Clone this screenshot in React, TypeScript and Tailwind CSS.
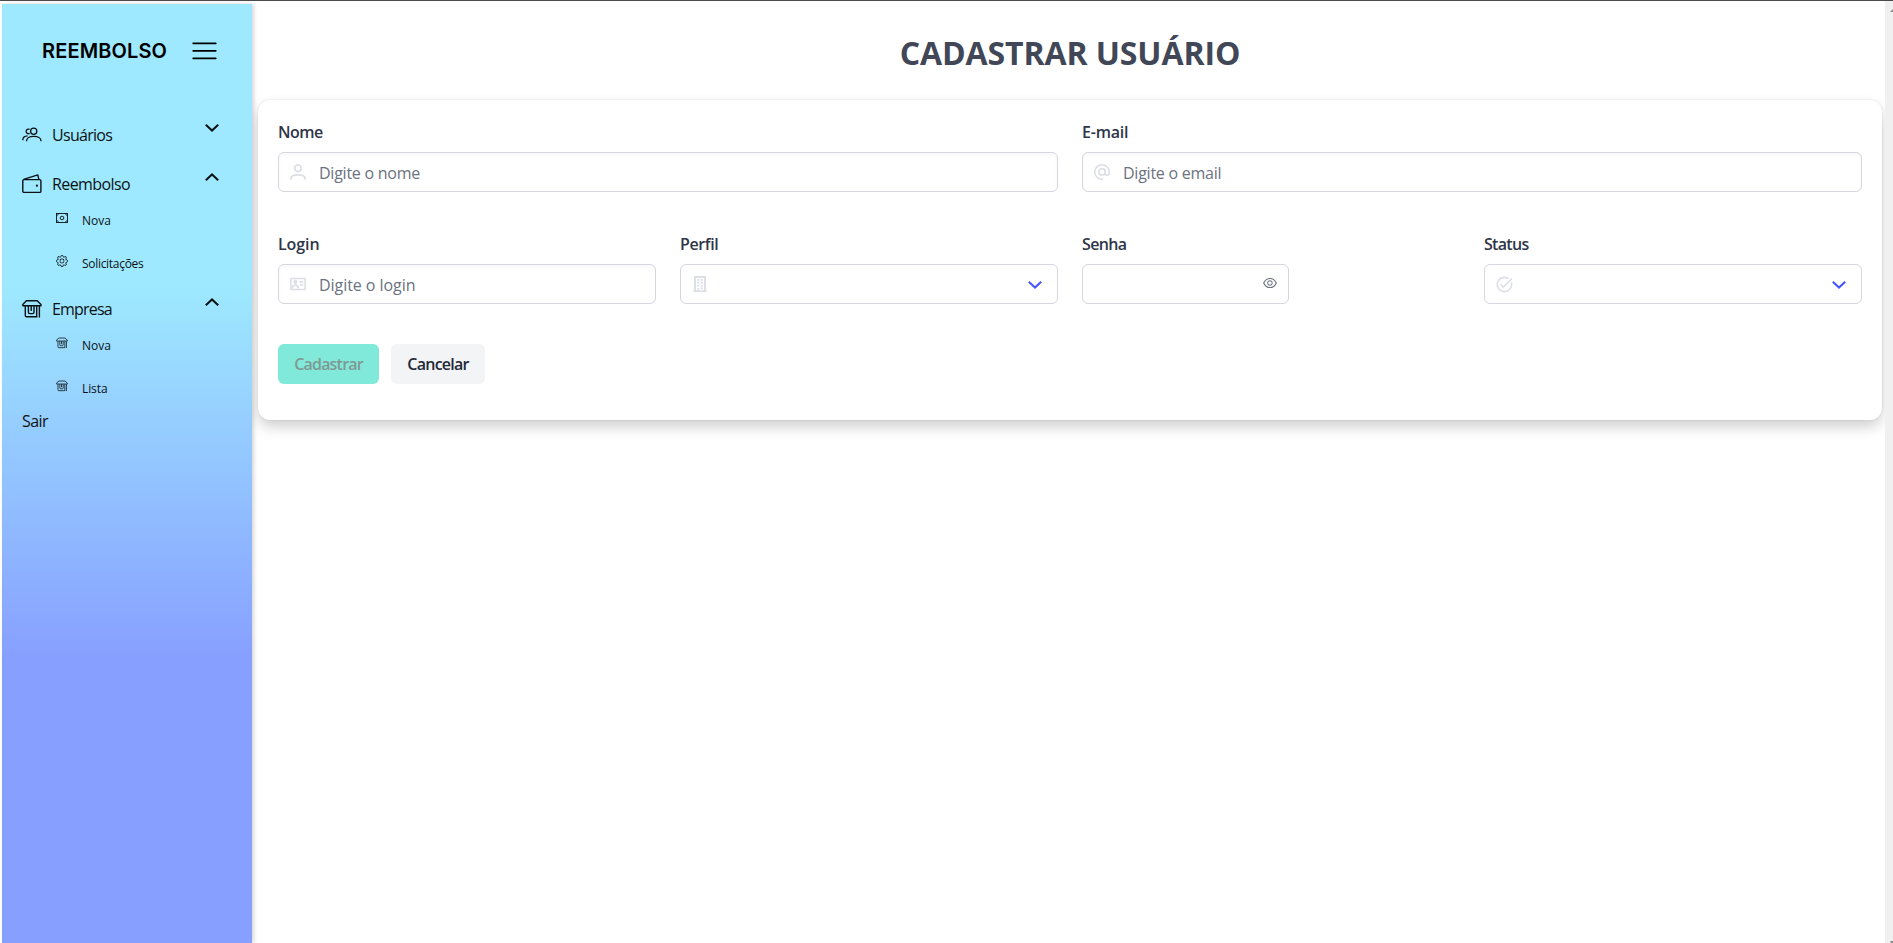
import type { ReactNode } from "react";
import { AiOutlineEye } from "react-icons/ai";
import { BsGear } from "react-icons/bs";
import { MdTaskAlt } from "react-icons/md";

function UsersIcon() {
  return (
    <svg viewBox="0 0 20 20" className="size-5 shrink-0" fill="none" stroke="currentColor" strokeWidth="1.3">
      <circle cx="11.7" cy="6.3" r="3.1" />
      <path d="M7.6 4.4A2.3 2.3 0 1 0 7.6 8.4" />
      <path d="M4.6 16.3v-.5c0-2.6 3-4.4 7.2-4.4s7.2 1.8 7.2 4.4v.5" />
      <path d="M.8 15.2c0-2.6 2-4.2 4.8-4.3" />
    </svg>
  );
}

function WalletIcon() {
  return (
    <svg viewBox="0 0 20 20" className="size-5 shrink-0" fill="none" stroke="currentColor" strokeWidth="1.4">
      <rect x=".8" y="5.6" width="18.1" height="12.8" rx="1.2" />
      <path d="M1.6 5.4 15.8.9l1 4.2" strokeLinejoin="round" />
      <circle cx="14.9" cy="11.7" r="1.1" fill="currentColor" stroke="none" />
    </svg>
  );
}

function ShopIcon({ className }: { className: string }) {
  return (
    <svg viewBox="0 0 20 20" className={className} fill="none" stroke="currentColor">
      <path d="M4.4 1.7h10.8l3.8 3.8v1.2H.8V5.5L4.4 1.7Z" strokeLinejoin="round" />
      <path d="M3.3 7v9.4c0 .8.6 1.4 1.4 1.4h10V7M17.4 7v11.4" />
      <path d="M6.4 7v6.2c0 .8.6 1.4 1.4 1.4h2.8c.8 0 1.4-.6 1.4-1.4V7M9.2 7v5" />
    </svg>
  );
}

function MoneyIcon({ className }: { className: string }) {
  return (
    <svg viewBox="0 0 12 12" className={className} fill="none" stroke="currentColor" strokeWidth=".9">
      <rect x=".5" y="1.5" width="11" height="9" />
      <circle cx="6" cy="6" r="1.8" />
      <path d="M.5 4.1 2.9 1.5M11.5 4.1 9.1 1.5M.5 7.9l2.4 2.6M11.5 7.9l-2.4 2.6" />
    </svg>
  );
}

function Chevron({ up = false, className = "" }: { up?: boolean; className?: string }) {
  return (
    <svg viewBox="0 0 14 8" className={`h-2 w-3.5 shrink-0 ${className}`} fill="none" stroke="currentColor" strokeWidth="2">
      <path d={up ? "M.8 7.2 7 1.4l6.2 5.8" : "M.8.8 7 6.6 13.2.8"} />
    </svg>
  );
}

function PersonIcon() {
  return (
    <svg viewBox="0 0 16 16" className="size-4" fill="none" stroke="currentColor" strokeWidth="1.8">
      <circle cx="8" cy="4.2" r="3.3" />
      <path d="M.9 15.8v-1.2c0-2.2 2.6-3.7 7.1-3.7s7.1 1.5 7.1 3.7v1.2" />
    </svg>
  );
}

function AtIcon() {
  return (
    <svg viewBox="0 0 16 16" className="size-4" fill="none" stroke="currentColor" strokeWidth="1.6">
      <circle cx="8" cy="7.9" r="3.1" />
      <path d="M11.1 4.8V9.3c0 1.1.7 1.8 1.9 1.8s2.2-.9 2.2-2.3V7.6A7 7 0 0 0 8 .8 7.1 7.1 0 0 0 .8 7.9 7.1 7.1 0 0 0 9 15.2" />
    </svg>
  );
}

function CardIcon() {
  return (
    <svg viewBox="0 0 16 16" className="size-4" fill="none" stroke="currentColor" strokeWidth="1.7">
      <path d="M.8 2.5h14.4v11H.8Z" strokeLinejoin="round" />
      <circle cx="5.4" cy="6" r="1.3" fill="currentColor" />
      <path d="M2.2 12.3c.3-2.3 1.4-3.3 3.2-3.3s2.900 1 3.200 3.300" />
      <path d="M9.3 5.9h4M10 8.9h3.3" />
    </svg>
  );
}

function BuildingIcon() {
  return (
    <svg viewBox="0 0 16 16" className="size-4" fill="none" stroke="currentColor" strokeWidth="1.7">
      <path d="M3 15.2V.9h10v14.3M1.3 15.2h13.4" strokeWidth="2" />
      <path d="M5.200 3.800h2.200M8.600 3.800h2.200M5.200 6.700h2.200M8.600 6.700h2.200M5.200 9.600h2.200M8.600 9.600h2.200M8.600 12.400h2.200M6.300 12v3" />
    </svg>
  );
}

function MenuGroup({ icon, label, tracking, up, children }: { icon: ReactNode; label: string; tracking: string; up?: boolean; children?: ReactNode }) {
  return (
    <div>
      <div className="flex h-6 pr-[33px]">
        <div className="flex flex-1 items-center gap-2.5">
          {icon}
          <span className={tracking}>{label}</span>
        </div>
        <Chevron up={up} className="mt-px" />
      </div>
      {children}
    </div>
  );
}

function SubItem({ icon, label, tracking = "" }: { icon: ReactNode; label: string; tracking?: string }) {
  return (
    <div className="flex h-4 items-start gap-3.5 pl-[34px] text-xs leading-4">
      {icon}
      <span className={`pt-px ${tracking}`}>{label}</span>
    </div>
  );
}

function Field({ label, tracking, className = "", boxClass = "", children }: { label: string; tracking: string; className?: string; boxClass?: string; children?: ReactNode }) {
  return (
    <div className={className}>
      <div className={`h-8 font-semibold text-[#2f3547] ${tracking}`}>{label}</div>
      <div className={`flex h-10 items-center rounded-[6px] border border-[#d5d6de] bg-white px-[11px] ${boxClass}`}>{children}</div>
    </div>
  );
}

const softIcon = "flex text-[#dddfe6]";
const hint = "ml-[13px] pt-0.5 text-[#6b7280]";

export default function App() {
  return (
    <div className="flex h-[943px] w-full flex-col overflow-hidden bg-white font-['Open_Sans','Noto_Sans',sans-serif] text-base leading-6 text-black">
      <div className="h-px shrink-0 bg-[#4d4a4d]" />
      <div className="flex min-h-0 flex-1">
        <aside className="mt-[3px] ml-[2px] w-[250px] shrink-0 bg-[linear-gradient(180deg,#9ee9ff_30%,#879fff_70%)] shadow-[2px_0_4px_rgba(0,0,0,0.16)]">
          <div className="flex h-[119px] items-start pt-[33px] pl-[40px]">
            <span className="w-[150px] font-['Inter'] text-xl leading-7 font-semibold tracking-[0.12px]">REEMBOLSO</span>
            <svg viewBox="0 0 25 18" className="mt-[5px] h-[18px] w-[25px]" fill="none" stroke="currentColor" strokeWidth="1.7" strokeLinecap="round">
              <path d="M1.2 1.3h22.6M1.2 8.8h22.6M1.2 16.3h22.6" />
            </svg>
          </div>
          <nav className="flex flex-col pl-5 text-[#0c1214]">
            <MenuGroup icon={<UsersIcon />} label="Usuários" tracking="tracking-[-0.7px]" />
            <div className="mt-[25px]">
              <MenuGroup icon={<WalletIcon />} label="Reembolso" tracking="tracking-[-0.6px]" up>
                <div className="mt-4 flex flex-col gap-[27px]">
                  <SubItem icon={<MoneyIcon className="size-3" />} label="Nova" />
                  <SubItem icon={<BsGear className="size-3" />} label="Solicitações" tracking="tracking-[-0.3px]" />
                </div>
              </MenuGroup>
            </div>
            <div className="mt-[26px]">
              <MenuGroup icon={<ShopIcon className="size-5 shrink-0 stroke-[1.4]" />} label="Empresa" tracking="tracking-[-0.8px]" up>
                <div className="mt-4 flex flex-col gap-[27px]">
                  <SubItem icon={<ShopIcon className="size-3 stroke-[1.3]" />} label="Nova" />
                  <SubItem icon={<ShopIcon className="size-3 stroke-[1.3]" />} label="Lista" tracking="tracking-[-0.1px]" />
                </div>
              </MenuGroup>
            </div>
            <span className="mt-[13px] tracking-[-0.6px]">Sair</span>
          </nav>
        </aside>

        <main className="flex min-w-0 flex-1 flex-col overflow-hidden pr-[3px] pl-[6px]">
          <h1 className="h-[99px] pt-8 text-center text-[32px] leading-10 font-bold tracking-[-0.1px] text-[#414756]">CADASTRAR USUÁRIO</h1>
          <section className="h-80 rounded-xl bg-white px-5 pt-5 shadow-[0_0_2px_rgba(0,0,0,0.12),0_8px_15px_-1px_rgba(0,0,0,0.15),0_4px_14px_rgba(0,0,0,0.06)]">
            <div className="grid grid-cols-4 gap-x-6 gap-y-10">
              <Field label="Nome" tracking="tracking-[-0.55px]" className="col-span-2" boxClass="shadow-[inset_0_2px_3px_rgba(0,0,0,0.03)]">
                <span className={softIcon}><PersonIcon /></span>
                <span className={`${hint} tracking-[-0.25px]`}>Digite o nome</span>
              </Field>
              <Field label="E-mail" tracking="tracking-[-0.2px]" className="col-span-2" boxClass="shadow-[inset_0_2px_3px_rgba(0,0,0,0.03)]">
                <span className={softIcon}><AtIcon /></span>
                <span className={`${hint} tracking-[-0.25px]`}>Digite o email</span>
              </Field>
              <Field label="Login" tracking="tracking-[-0.1px]" boxClass="shadow-[inset_0_2px_3px_rgba(0,0,0,0.03)]">
                <span className={softIcon}><CardIcon /></span>
                <span className={`${hint} tracking-[-0.05px]`}>Digite o login</span>
              </Field>
              <Field label="Perfil" tracking="tracking-[-0.4px]" boxClass="justify-between pr-[15px]">
                <span className={softIcon}><BuildingIcon /></span>
                <Chevron className="mt-0.5 text-[#4353ff]" />
              </Field>
              <Field label="Senha" tracking="tracking-[-0.65px]" boxClass="w-[207px] justify-end pr-[10px]">
                <AiOutlineEye className="-mt-0.5 size-4 text-[#6b7280]" />
              </Field>
              <Field label="Status" tracking="tracking-[-0.7px]" boxClass="justify-between pr-[15px]">
                <span className={softIcon}><MdTaskAlt className="-mx-[1.5px] size-[19px]" /></span>
                <Chevron className="mt-0.5 text-[#4353ff]" />
              </Field>
            </div>
            <div className="mt-10 flex gap-3 font-semibold">
              <button className="h-10 w-[101px] rounded-[6px] bg-[#80e9d9] tracking-[-0.8px] text-[#7f9994]">Cadastrar</button>
              <button className="h-10 w-[94px] rounded-[6px] bg-[#f3f4f6] tracking-[-0.75px] text-[#1f2937]">Cancelar</button>
            </div>
          </section>
        </main>

        <div className="flex w-2 shrink-0 flex-col items-end justify-between overflow-hidden bg-[#f0f0f0] pt-2">
          <svg viewBox="0 0 3 3" className="size-[3px]">
            <path d="M0 3 3 0v3Z" fill="#8a8a8a" />
          </svg>
          <svg viewBox="0 0 3 2" className="h-0.5 w-[3px]">
            <path d="M0 0h3v2H1Z" fill="#8a8a8a" />
          </svg>
        </div>
      </div>
    </div>
  );
}
